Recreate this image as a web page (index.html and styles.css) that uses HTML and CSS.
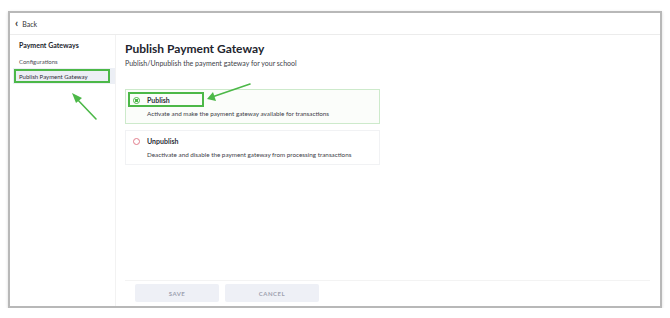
FILE: index.html
```html
<!DOCTYPE html>
<html lang="en">
<head>
    <meta charset="UTF-8">
    <title>Publish Payment Gateway</title>
    <link rel="stylesheet" href="styles.css">
</head>
<body>
    <div class="frame">
        <!-- Top bar -->
        <div class="topbar">
            <span class="chevron">&#8249;</span> Back
        </div>

        <div class="layout">
            <!-- Left menu -->
            <div class="side-bar">
                <h3>Payment Gateways</h3>
                <ul>
                    <li><a href="#">Configurations</a></li>
                    <li class="active"><a href="#">Publish Payment Gateway</a><span class="mark mark-menu"></span></li>
                </ul>
            </div>

            <!-- Main content -->
            <div class="content">
                <h2>Publish Payment Gateway</h2>
                <p class="sub-header">Publish/Unpublish the payment gateway for your school</p>

                <div class="options">
                    <label class="option selected">
                        <span class="radio"></span>
                        <span class="option-text">
                            <span class="option-title">Publish</span>
                            <span class="option-desc">Activate and make the payment gateway available for transactions</span>
                        </span>
                        <span class="mark mark-option"></span>
                    </label>
                    <label class="option">
                        <span class="radio"></span>
                        <span class="option-text">
                            <span class="option-title">Unpublish</span>
                            <span class="option-desc">Deactivate and disable the payment gateway from processing transactions</span>
                        </span>
                    </label>
                </div>

                <div class="actions">
                    <button class="btn">SAVE</button>
                    <button class="btn">CANCEL</button>
                </div>
            </div>
        </div>

        <!-- Annotation arrows -->
        <svg class="arrows" width="654" height="297" viewBox="0 0 654 297">
            <g stroke="#4cb848" stroke-width="1.6" fill="none" stroke-linecap="round">
                <line x1="86" y1="106" x2="66" y2="85"/>
                <line x1="240" y1="71" x2="202" y2="84"/>
            </g>
            <g fill="#4cb848">
                <polygon points="62,80 72,85 66,90"/>
                <polygon points="197,86 203,79 206,88"/>
            </g>
        </svg>
    </div>
</body>
</html>
```

FILE: styles.css
```css
body {
    font-family: Lato, "Liberation Sans", sans-serif;
    background-color: #fff;
    margin: 0;
    padding: 11px 8px 0 8px;
    color: #23252e;
}

.frame {
    position: relative;
    width: 650px;
    height: 293px;
    border: 2px solid #b8b8b8;
    box-shadow: 0 1px 3px rgba(0, 0, 0, 0.15);
    display: flex;
    flex-direction: column;
    background-color: #fff;
}

.topbar {
    height: 21px;
    border-bottom: 1px solid #ececec;
    display: flex;
    align-items: center;
    padding-left: 5px;
    font-size: 7px;
    color: #333;
}

.chevron {
    font-size: 11px;
    font-weight: bold;
    margin-right: 4px;
    line-height: 1;
    margin-top: -2px;
}

.layout {
    flex: 1;
    display: flex;
}

.side-bar {
    width: 105px;
    border-right: 1px solid #f2f2f2;
    padding-top: 5px;
}

.side-bar h3 {
    font-size: 7px;
    font-weight: bold;
    margin: 0 0 0 9px;
    line-height: 10px;
}

.side-bar ul {
    list-style-type: none;
    padding: 0;
    margin: 4px 0 0 0;
}

.side-bar li {
    position: relative;
    height: 14px;
    display: flex;
    align-items: center;
    padding-left: 9px;
    font-size: 6px;
}

.side-bar li a {
    color: #4c4e56;
    text-decoration: none;
}

.side-bar li.active {
    background-color: #eceff5;
    margin-left: 3px;
    padding-left: 6px;
    height: 16px;
}

.side-bar li.active a {
    color: #2c2e36;
}

.mark {
    position: absolute;
    border: 2px solid #4cb848;
}

.mark-menu {
    left: 1px;
    top: 1px;
    width: 92px;
    height: 10px;
}

.content {
    flex: 1;
    display: flex;
    flex-direction: column;
    padding: 6px 10px 0 9px;
}

.content h2 {
    font-size: 12px;
    font-weight: bold;
    margin: 0;
    line-height: 16px;
}

.sub-header {
    font-size: 7px;
    color: #404148;
    margin: 1px 0 0 0;
    line-height: 10px;
}

.options {
    margin-top: 21px;
    width: 255px;
    display: flex;
    flex-direction: column;
    gap: 6px;
}

.option {
    position: relative;
    display: flex;
    align-items: flex-start;
    height: 35px;
    border: 1px solid #f1f2f4;
    padding: 5px 0 0 7px;
    box-sizing: border-box;
}

.option.selected {
    border-color: #cdeacb;
    background-color: #fbfdfa;
}

.radio {
    width: 5px;
    height: 5px;
    border-radius: 50%;
    border: 1px solid #e27d8c;
    margin-top: 2px;
    margin-right: 7px;
    flex-shrink: 0;
}

.selected .radio {
    border-color: #4cb848;
    background: radial-gradient(circle, #4cb848 0 1.6px, #fff 2px);
}

.option-text {
    display: flex;
    flex-direction: column;
}

.option-title {
    font-size: 7px;
    font-weight: bold;
    line-height: 11px;
    color: #2c2e38;
}

.option-desc {
    font-size: 6.3px;
    color: #404148;
    margin-top: 4px;
}

.mark-option {
    left: 2px;
    top: 2px;
    width: 72px;
    height: 11px;
}

.actions {
    margin-top: auto;
    border-top: 1px solid #f3f3f3;
    padding: 3px 0 4px 10px;
    display: flex;
    gap: 6px;
}

.btn {
    background-color: #eef0f6;
    border: none;
    border-radius: 2px;
    color: #9ea2b0;
    font-family: Lato, "Liberation Sans", sans-serif;
    font-size: 6px;
    font-weight: bold;
    letter-spacing: 0.5px;
    width: 84px;
    height: 18px;
    cursor: pointer;
}

.btn + .btn {
    width: 94px;
}

.arrows {
    position: absolute;
    left: 0;
    top: 0;
    pointer-events: none;
}
```
